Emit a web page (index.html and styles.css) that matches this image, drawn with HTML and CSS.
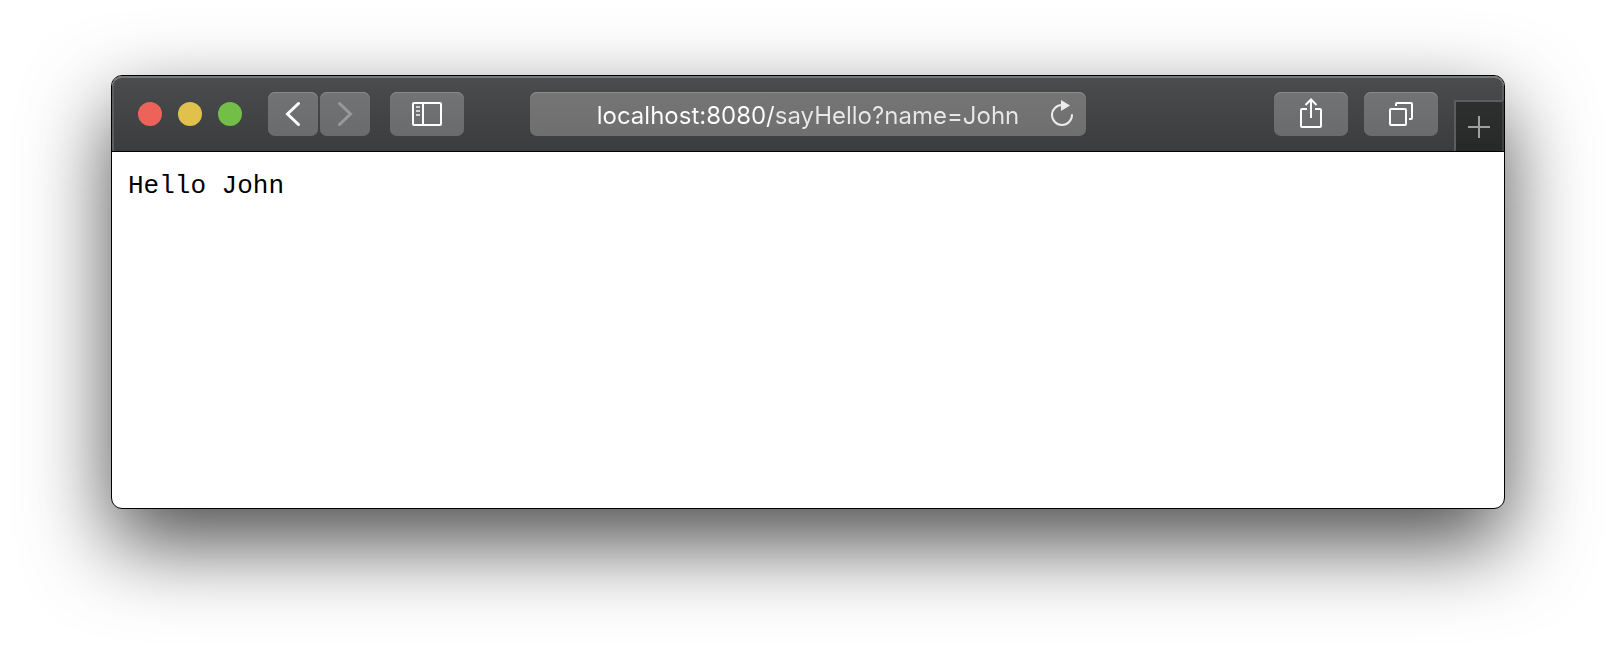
FILE: index.html
```html
<!DOCTYPE html>
<html lang="en">
<head>
<meta charset="utf-8">
<meta name="viewport" content="width=device-width, initial-scale=1">
<title>localhost:8080/sayHello?name=John</title>
<link rel="stylesheet" href="styles.css">
</head>
<body>
<div class="window">
  <header class="toolbar">
    <div class="side side-left">
      <div class="lights">
        <button class="light light-close" type="button" aria-label="Close"></button>
        <button class="light light-minimize" type="button" aria-label="Minimize"></button>
        <button class="light light-zoom" type="button" aria-label="Zoom"></button>
      </div>
      <div class="history">
        <button class="tool tool-narrow" type="button" aria-label="Back">
          <svg width="50" height="44" viewBox="0 0 50 44" fill="none" stroke="#fff" stroke-width="3" stroke-linecap="round" stroke-linejoin="miter"><path d="M30.5 11.5L19.5 22l11 10.500"/></svg>
        </button>
        <button class="tool tool-narrow" type="button" aria-label="Forward" disabled>
          <svg width="50" height="44" viewBox="0 0 50 44" fill="none" stroke="#98999a" stroke-width="3" stroke-linecap="round" stroke-linejoin="miter"><path d="M19.500 11.500L30.500 22l-11 10.500"/></svg>
        </button>
      </div>
      <button class="tool" type="button" aria-label="Show sidebar">
        <svg width="74" height="44" viewBox="0 0 74 44" fill="none" stroke="#fff" stroke-width="2"><rect x="23" y="11" width="28" height="22" rx="1"/><path d="M33 11v22"/><path stroke="#d0d0d0" d="M26 15h4M26 19h4M26 23h4"/></svg>
      </button>
    </div>
    <form class="address">
      <input class="address-input" type="text" aria-label="Address" value="localhost:8080/sayHello?name=John" spellcheck="false">
      <button class="reload" type="button" aria-label="Reload">
        <svg width="24" height="28" viewBox="0 0 24 28" fill="none" stroke="#ebebeb" stroke-width="2"><path d="M12 5A10 10 0 1 0 22 15" stroke-linecap="round"/><path d="M11 0l9 5.500-9 5.500z" fill="#ebebeb" stroke="none"/></svg>
      </button>
    </form>
    <div class="side side-right">
      <button class="tool" type="button" aria-label="Share">
        <svg width="74" height="44" viewBox="0 0 74 44" fill="none" stroke="#fff" stroke-width="2"><path d="M33 17h-5q-1 0-1 1v16q0 1 1 1h18q1 0 1-1V18q0-1-1-1h-5"/><path d="M37 26V8M31.500 13L37 7.500 42.500 13"/></svg>
      </button>
      <button class="tool" type="button" aria-label="Show all tabs">
        <svg width="74" height="44" viewBox="0 0 74 44" fill="none" stroke="#fff" stroke-width="2"><rect x="26" y="17" width="16" height="16" rx="1"/><path d="M32 14v-2q0-1 1-1h14q1 0 1 1v14q0 1-1 1h-2"/></svg>
      </button>
      <button class="new-tab" type="button" aria-label="New tab">
        <svg width="22" height="22" viewBox="0 0 22 22" fill="none" stroke="#a0a0a0" stroke-width="2"><path d="M11 0v22M0 11h22"/></svg>
      </button>
    </div>
  </header>
  <main class="page">
    <pre class="output">Hello John</pre>
  </main>
</div>
</body>
</html>
```
FILE: styles.css
```css
* {
  box-sizing: border-box;
}

body {
  margin: 0;
  padding: 75px 111px 147px;
  min-height: 100vh;
  display: flex;
  background: #fff;
  font-family: Inter, "Liberation Sans", sans-serif;
}

button {
  padding: 0;
  border: 0;
  font: inherit;
}

svg {
  display: block;
}

.window {
  flex: 1;
  min-width: 0;
  display: flex;
  flex-direction: column;
  overflow: hidden;
  border: 1px solid #000;
  border-radius: 11px;
  background: #fff;
  box-shadow: 0 34px 84px rgba(0, 0, 0, 0.7);
}

.toolbar {
  display: flex;
  align-items: center;
  height: 76px;
  border-bottom: 1px solid #000;
  border-radius: 10px 10px 0 0;
  background: linear-gradient(#4b4c4d, #3b3c3d);
  box-shadow: inset 0 2px #777879, inset 2px 0 #5c5d5e, inset -2px 0 #5c5d5e;
}

.side {
  flex: 1 1 0;
  display: flex;
  align-items: center;
}

.side-right {
  align-self: stretch;
  justify-content: flex-end;
  gap: 16px;
}

.lights {
  display: flex;
  gap: 16px;
  margin: 0 26px;
}

.light {
  width: 24px;
  height: 24px;
  border-radius: 50%;
}

.light-close {
  background: #ee6359;
}

.light-minimize {
  background: #e1c04c;
}

.light-zoom {
  background: #72be47;
}

.history {
  display: flex;
  gap: 2px;
  margin-right: 20px;
}

.tool {
  width: 74px;
  height: 44px;
  border-radius: 7px;
  background: linear-gradient(#727375, #6a6b6d);
  box-shadow: inset 0 1px #88898a;
}

.tool-narrow {
  width: 50px;
}

.address {
  flex: 0 1 556px;
  position: relative;
  height: 44px;
  border-radius: 7px;
  background: linear-gradient(#747574, #6e6f6e);
  box-shadow: inset 0 1px #8b8d8b;
}

.address-input {
  display: block;
  width: 100%;
  height: 100%;
  padding: 3px 0 0;
  border: 0;
  outline: 0;
  font: 24px Inter, "Liberation Sans", sans-serif;
  text-align: center;
  color: #fff;
  background: linear-gradient(90deg, #fff 44%, #e8e8e8 44%);
  background-clip: text;
  -webkit-background-clip: text;
  -webkit-text-fill-color: transparent;
}

.reload {
  position: absolute;
  top: 8px;
  right: 12px;
  background: none;
}

.new-tab {
  align-self: flex-end;
  display: flex;
  align-items: center;
  justify-content: center;
  width: 50px;
  height: 51px;
  border-top: 2px solid #5c5d5e;
  border-left: 2px solid #5c5d5e;
  border-right: 2px solid #414242;
  background: linear-gradient(#2e2f2f, #272828);
}

.page {
  flex: 1;
  padding: 18px 16px;
}

.output {
  margin: 0;
  font: 26px/32px "Liberation Mono", monospace;
  color: #000;
}
```
